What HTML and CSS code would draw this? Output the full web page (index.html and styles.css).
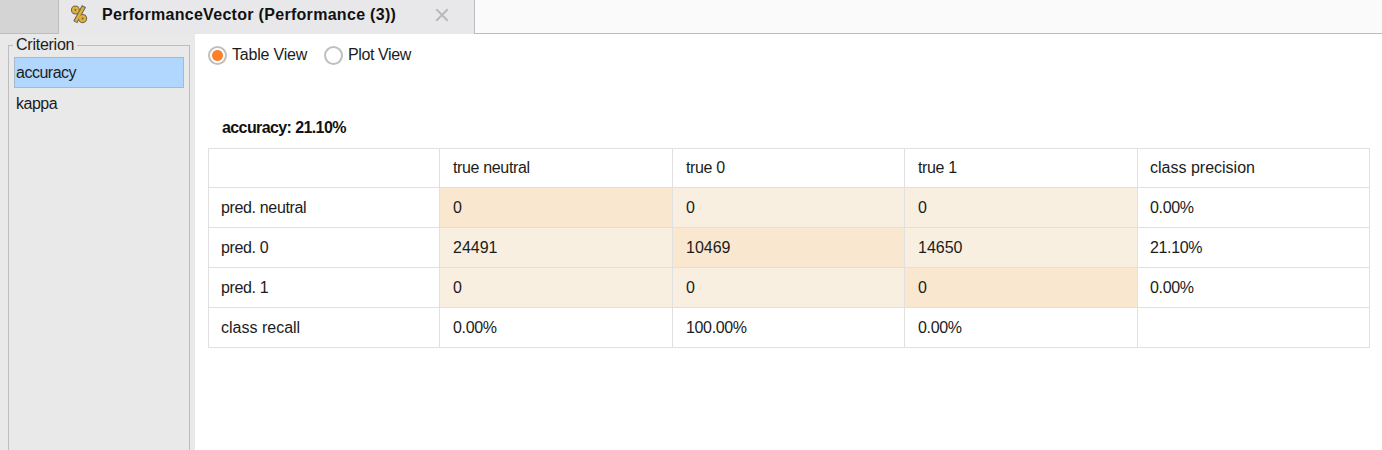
FILE: index.html
```html
<!DOCTYPE html>
<html lang="en">
<head>
<meta charset="utf-8">
<title>PerformanceVector</title>
<link rel="stylesheet" href="styles.css">
</head>
<body>
<div class="app">
  <header class="tabs">
    <div class="tab-left"></div>
    <div class="tab">
      <svg class="percent" width="18" height="19" viewBox="0 0 18 19" fill="none">
        <g stroke="#6b6658" stroke-width="4.6"><circle cx="5.4" cy="5" r="2.2"/><circle cx="12.6" cy="13.6" r="2.3"/><path d="M14 1.2 5.2 17.2"/></g>
        <g stroke="#e0b138" stroke-width="2.5"><circle cx="5.4" cy="5" r="2.2"/><circle cx="12.6" cy="13.6" r="2.3"/><path d="M13.5 2.1 5.7 16.3"/></g>
      </svg>
      <span class="tab-title">PerformanceVector (Performance (3))</span>
      <svg class="close" width="14" height="14" viewBox="0 0 14 14"><path d="M1.3 1.3 12.7 12.7M12.7 1.3 1.3 12.7" stroke="#b9b9b9" stroke-width="2"/></svg>
    </div>
    <div class="tab-rest"></div>
  </header>
  <div class="body">
    <aside class="sidebar">
      <fieldset class="criterion">
        <legend>Criterion</legend>
        <div class="item selected">accuracy</div>
        <div class="item">kappa</div>
      </fieldset>
    </aside>
    <main class="content">
      <div class="views">
        <span class="radio on"></span><span class="view table-view">Table View</span>
        <span class="radio"></span><span class="view">Plot View</span>
      </div>
      <div class="summary">accuracy: 21.10%</div>
      <div class="grid">
        <div class="head"></div><div class="head">true neutral</div><div class="head">true 0</div><div class="head">true 1</div><div class="head wide">class precision</div>
        <div>pred. neutral</div><div class="hit">0</div><div class="miss">0</div><div class="miss">0</div><div>0.00%</div>
        <div>pred. 0</div><div class="miss wide">24491</div><div class="hit wide">10469</div><div class="miss wide">14650</div><div>21.10%</div>
        <div>pred. 1</div><div class="miss">0</div><div class="miss">0</div><div class="hit">0</div><div>0.00%</div>
        <div class="wide">class recall</div><div>0.00%</div><div>100.00%</div><div>0.00%</div><div></div>
      </div>
    </main>
  </div>
</div>
</body>
</html>
```
FILE: styles.css
```css
* { box-sizing: border-box; }
body { margin: 0; font: 16px/20px "Liberation Sans", Arial, sans-serif; color: #1c1c1c; background: #fff; }
.app { height: 450px; display: flex; flex-direction: column; overflow: hidden; }
.tabs { display: flex; height: 34px; flex: none; }
.tab-left { width: 59px; background: #d4d4d4; border-right: 1px solid #bdbdbd; border-bottom: 1px solid #bdbdbd; }
.tab { width: 415px; background: #e8e8ea; display: flex; align-items: flex-start; padding: 5px 0 0 11px; }
.percent { flex: none; }
.tab-title { width: 333px; margin-left: 14px; font-weight: bold; letter-spacing: .3px; color: #111; white-space: nowrap; flex: none; }
.close { flex: none; margin-top: 3px; }
.tab-rest { flex: 1; background: #fafafa; border-left: 1px solid #bdbdbd; border-bottom: 1px solid #bdbdbd; }
.body { flex: 1; display: flex; min-height: 0; }
.sidebar { width: 195px; background: #e9e9e9; padding: 1px 5px 0 8px; letter-spacing: -.5px; }
.criterion { margin: 0; height: 440px; min-width: 0; padding: 2px 5px; border: 1px solid #bdbdbd; }
.criterion legend { margin-left: -1px; padding: 0 3px; letter-spacing: -.25px; }
.item { height: 31px; padding: 5px 1px; border: 1px solid transparent; }
.item.selected { background: #b1d7ff; border-color: #a9b9ca; }
.content { flex: 1; padding: 11px 12px 0 13px; }
.views { display: flex; align-items: center; height: 20px; }
.radio { width: 19px; height: 19px; border: 2px solid #bfbfbf; border-radius: 50%; margin-right: 5px; }
.radio.on { background: radial-gradient(circle, #fc7f2b 5px, #fff 6px); }
.view { letter-spacing: -.4px; }
.table-view { width: 92px; letter-spacing: -.2px; }
.summary { margin: 53px 0 10px 14px; font-weight: bold; letter-spacing: -.6px; color: #111; }
.grid { display: grid; grid-template-columns: 231px 233px 232px 233px 1fr; grid-template-rows: 39px 40px 40px 40px 40px; border: solid #e0e0e0; border-width: 1px 0 0 1px; letter-spacing: -.35px; }
.grid > div { border: solid #e0e0e0; border-width: 0 1px 1px 0; padding: 10px 13px; white-space: nowrap; }
.grid > div:nth-child(5n + 1), .grid > div:nth-child(5n) { padding-left: 12px; }
.grid > .head { padding-top: 9px; }
.grid > .hit { background: #f9e8cf; }
.grid > .miss { background: #f8efe1; }
.grid > .wide { letter-spacing: 0; }
```
